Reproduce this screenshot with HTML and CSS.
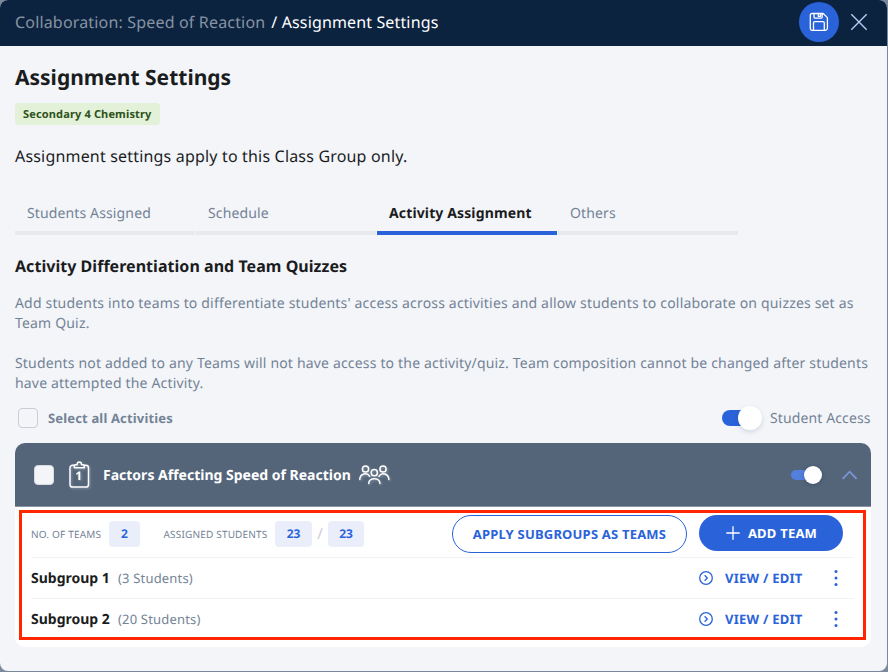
FILE: index.html
```html
<!DOCTYPE html>
<html lang="en">
<head>
<meta charset="utf-8">
<title>Assignment Settings</title>
<link rel="stylesheet" href="styles.css">
</head>
<body>
<div class="modal">
  <header class="topbar">
    <nav class="crumbs"><span class="crumb-parent">Collaboration: Speed of Reaction</span><span class="crumb-current">/ Assignment Settings</span></nav>
    <button class="save" aria-label="Save">
      <svg width="20" height="20" viewBox="0 0 20 20" fill="none" stroke="#fff" stroke-width="1.3" stroke-linejoin="round"><path d="M3 1.5h11.2L18.4 5.6V16a2.3 2.3 0 0 1-2.3 2.3H3A1.7 1.7 0 0 1 1.300 16.600V3.200A1.700 1.700 0 0 1 3 1.500Z"/><path d="M5 1.700v3.200q0 1.200 1.200 1.200h5.800q1.200 0 1.200-1.200V1.700M9.300 1.700v2.600h2.200V1.700M4.500 18v-7q0-1.300 1.300-1.300h8.200q1.300 0 1.300 1.300v7"/></svg>
    </button>
    <button class="close" aria-label="Close">
      <svg width="18" height="18" viewBox="0 0 18 18" fill="none" stroke="#b4cbf5" stroke-width="1.4"><path d="M1.300 1.300 16.700 16.700M16.700 1.300 1.300 16.700"/></svg>
    </button>
  </header>
  <main class="content">
    <h1>Assignment Settings</h1>
    <span class="badge">Secondary 4 Chemistry</span>
    <p class="lead">Assignment settings apply to this Class Group only.</p>
    <div class="tabs">
      <div class="tab">Students Assigned</div>
      <div class="tab">Schedule</div>
      <div class="tab tab-active">Activity Assignment</div>
      <div class="tab">Others</div>
    </div>
    <h2>Activity Differentiation and Team Quizzes</h2>
    <p class="help">Add students into teams to differentiate students' access across activities and allow students to collaborate on quizzes set as<br>Team Quiz.</p>
    <p class="help">Students not added to any Teams will not have access to the activity/quiz. Team composition cannot be changed after students<br>have attempted the Activity.</p>
    <div class="select-row">
      <span class="checkbox"></span><span class="select-label">Select all Activities</span>
      <span class="switch"><span class="knob"></span></span><span class="access">Student Access</span>
    </div>
    <section class="card">
      <div class="card-head">
        <span class="checkbox filled"></span>
        <svg class="clip" width="22" height="28" viewBox="0 0 22 28" fill="none" stroke="#fff" stroke-width="1.500" stroke-linejoin="round"><path d="M6 4.300H3.600A2.600 2.600 0 0 0 1 6.900v16.500A2.600 2.600 0 0 0 3.600 26h13.300a2.600 2.600 0 0 0 2.600-2.600V6.900a2.600 2.600 0 0 0-2.600-2.600H15"/><path d="M5.300 6.800V4.900q0-1.200 1.200-1.200h1.600C8.100.2 12.500.2 12.500 3.700h1.600q1.200 0 1.200 1.200v1.900Z"/><text class="clip-number" x="9.800" y="19">1</text></svg>
        <h3>Factors Affecting Speed of Reaction</h3>
        <svg class="people" width="32" height="22" viewBox="0 0 32 22" fill="none" stroke="#fff" stroke-width="1.500" stroke-linecap="round"><circle cx="6.500" cy="5" r="3.100"/><circle cx="24" cy="5" r="3.100"/><circle cx="15.300" cy="8.700" r="3.100"/><path d="M.8 15.500c0-6 7.300-7.500 9.900-3.200M29.800 15.500c0-6-7.300-7.500-9.900-3.200M9.700 19.500c0-6.500 11.200-6.500 11.200 0"/></svg>
        <span class="switch small"><span class="knob"></span></span>
        <svg class="chevron" width="16" height="10" viewBox="0 0 16 10" fill="none" stroke="#7897d8" stroke-width="1.800"><path d="M.6 8.800 7.600 1.700 14.600 8.800"/></svg>
      </div>
      <div class="team-box">
        <div class="summary">
          <span class="caption teams">NO. OF TEAMS</span><span class="pill one">2</span>
          <span class="caption assigned">ASSIGNED STUDENTS</span><span class="pill">23</span><span class="slash">/</span><span class="pill last">23</span>
          <button class="apply">APPLY SUBGROUPS AS TEAMS</button>
          <button class="add"><svg width="14" height="14" viewBox="0 0 14 14" stroke="#fff" stroke-width="1.300"><path d="M7 .3v13.400M.3 7h13.400"/></svg><span>ADD TEAM</span></button>
        </div>
        <div class="team">
          <strong>Subgroup 1</strong><span class="count">(3 Students)</span>
          <svg class="go" width="14" height="14" viewBox="0 0 14 14" fill="none" stroke="#2a63d9" stroke-width="1.300"><circle cx="7" cy="7" r="6.300"/><path d="M5.600 4.300 8.300 7 5.600 9.700"/></svg>
          <span class="view">VIEW / EDIT</span>
          <svg class="dots" width="4" height="16" viewBox="0 0 4 16" fill="#2a63d9"><circle cx="2" cy="1.600" r="1.500"/><circle cx="2" cy="8" r="1.500"/><circle cx="2" cy="14.400" r="1.500"/></svg>
        </div>
        <div class="team">
          <strong>Subgroup 2</strong><span class="count">(20 Students)</span>
          <svg class="go" width="14" height="14" viewBox="0 0 14 14" fill="none" stroke="#2a63d9" stroke-width="1.300"><circle cx="7" cy="7" r="6.300"/><path d="M5.600 4.300 8.300 7 5.600 9.700"/></svg>
          <span class="view">VIEW / EDIT</span>
          <svg class="dots" width="4" height="16" viewBox="0 0 4 16" fill="#2a63d9"><circle cx="2" cy="1.600" r="1.500"/><circle cx="2" cy="8" r="1.500"/><circle cx="2" cy="14.400" r="1.500"/></svg>
        </div>
      </div>
    </section>
  </main>
</div>
</body>
</html>
```
FILE: styles.css
```css
* { box-sizing: border-box; }
body { margin: 0; width: 888px; height: 672px; overflow: hidden; background: #7b899a; font-family: "Noto Sans", sans-serif; color: #1b1c1e; text-rendering: geometricPrecision; }
h1, h2, h3, p { margin: 0; white-space: nowrap; }
button { font: inherit; border: 0; padding: 0; background: none; }
svg { display: block; flex: none; }
.modal { width: 887px; height: 671px; border-radius: 8px; overflow: hidden; background: #f3f5f9; }
.topbar { height: 46px; background: #0c2340; display: flex; align-items: center; padding: 0 19px 2px 15px; }
.crumbs { display: flex; gap: 6px; font-size: 16px; letter-spacing: .17px; white-space: nowrap; }
.crumb-parent { color: #8793a2; }
.crumb-current { color: #fff; letter-spacing: .14px; }
.save { width: 40px; height: 40px; border-radius: 50%; background: #2a63d9; margin-left: auto; display: flex; align-items: center; justify-content: center; }
.close { margin-left: 11px; }
.content { padding: 0 16px 0 15px; }
h1 { font-size: 21px; line-height: 28px; margin-top: 18px; }
.badge { display: block; width: 145px; height: 22px; margin-top: 11px; border-radius: 4px; background: #e2f1d7; color: #2f5220; font-size: 11px; font-weight: 700; line-height: 20px; padding: 2px 0 0 8px; letter-spacing: .15px; white-space: nowrap; }
.lead { margin-top: 19px; font-size: 16px; line-height: 24px; letter-spacing: .18px; }
.tabs { display: flex; gap: 1px; margin-top: 27px; }
.tab { width: 180px; height: 40px; border-bottom: 4px solid #e7e9ed; padding: 1px 0 0 12px; color: #738396; font-size: 14px; line-height: 36px; letter-spacing: .13px; white-space: nowrap; }
.tab-active { border-color: #2a63d9; color: #1b1c1e; font-weight: 700; }
h2 { font-size: 16px; line-height: 24px; margin-top: 19px; letter-spacing: .04px; }
.help { height: 40px; margin-top: 16px; font-size: 14px; line-height: 20px; letter-spacing: .175px; color: #738396; }
.help + .help { margin-top: 20px; }
.select-row { display: flex; align-items: center; height: 30px; margin-top: 9px; color: #738396; font-size: 14px; white-space: nowrap; }
.checkbox { width: 20px; height: 20px; border: 1px solid #c9cdd4; border-radius: 4px; margin-left: 3px; flex: none; }
.select-label { margin-left: 10px; font-size: 13px; font-weight: 700; letter-spacing: .16px; }
.switch { width: 40px; height: 16px; border-radius: 8px; background: linear-gradient(90deg, #2a63d9 65%, transparent 65%); margin-left: auto; display: flex; align-items: center; justify-content: flex-end; flex: none; }
.knob { width: 24px; height: 24px; border-radius: 50%; background: #fff; box-shadow: 0 2px 5px rgba(30, 50, 80, .15); }
.access { margin-left: 8px; letter-spacing: .12px; width: 101px; }
.card { margin-top: 10px; height: 204px; border-radius: 10px; background: #fff; overflow: hidden; }
.card-head { height: 64px; background: #54657a; border-bottom: 1px solid #8794a4; display: flex; align-items: center; padding: 0 13px 0 16px; }
.filled { background: #f3f5f9; border-color: #d7dbe1; }
.clip { margin-left: 15px; filter: drop-shadow(1px 1px 1px rgba(255, 255, 255, .3)); }
.clip-number { font-size: 12px; font-weight: 700; fill: #fff; stroke: none; text-anchor: middle; }
h3 { color: #fff; font-size: 14px; line-height: 20px; margin-left: 12px; padding-top: 2px; width: 248px; }
.people { margin-left: 8px; filter: drop-shadow(1px 1px 1px rgba(255, 255, 255, .3)); }
.small { width: 31px; height: 10px; background: linear-gradient(90deg, #537fdf 65%, transparent 65%); border-radius: 5px; }
.small .knob { width: 18px; height: 18px; box-shadow: 0 1px 4px rgba(20, 40, 70, .3); }
.chevron { margin-left: 20px; }
.team-box { width: 847px; height: 130px; margin: 3px 0 0 4px; border: 3px solid #ff2600; padding: 0 9px; }
.summary { display: flex; align-items: center; height: 45px; border-bottom: 1px solid #f2f3f5; white-space: nowrap; padding-bottom: 5px; }
.summary > * { flex: none; }
.caption { margin-top: 3px; font-size: 10px; color: #738396; letter-spacing: .18px; }
.teams { width: 78px; }
.assigned { width: 111.5px; margin-left: 23.5px; }
.pill { width: 37px; height: 26px; margin-top: 3px; border-radius: 4px; background: #eaeefb; color: #2a63d9; font-size: 12px; font-weight: 700; line-height: 26px; text-align: center; }
.one { width: 31px; }
.last { width: 36px; }
.slash { width: 16px; margin-top: 2px; text-align: center; font-size: 15px; color: #c9cdd4; }
.apply { width: 235px; height: 38px; margin-left: 88px; margin-top: 3px; border: 1px solid #2a63d9; border-radius: 19px; color: #2a63d9; font-size: 13px; font-weight: 700; letter-spacing: .2px; }
.add { width: 144px; height: 36px; margin-left: 12px; border-radius: 18px; background: #2a63d9; color: #fff; font-size: 13px; font-weight: 700; letter-spacing: .22px; display: flex; gap: 8px; align-items: center; justify-content: center; padding-left: 1px; }
.team { height: 41px; border-bottom: 1px solid #f2f3f5; display: flex; align-items: center; font-size: 14px; white-space: nowrap; padding-right: 16.5px; }
.team:last-child { border: 0; height: 38px; padding-top: 2px; }
.team strong { width: 79px; }
.count { margin-left: 8px; font-size: 13px; color: #738396; letter-spacing: .18px; }
.go { margin-left: auto; }
.view { margin-left: 12px; width: 78px; color: #2a63d9; font-size: 13px; font-weight: 700; letter-spacing: .25px; }
.dots { margin-left: 30.5px; }
```
